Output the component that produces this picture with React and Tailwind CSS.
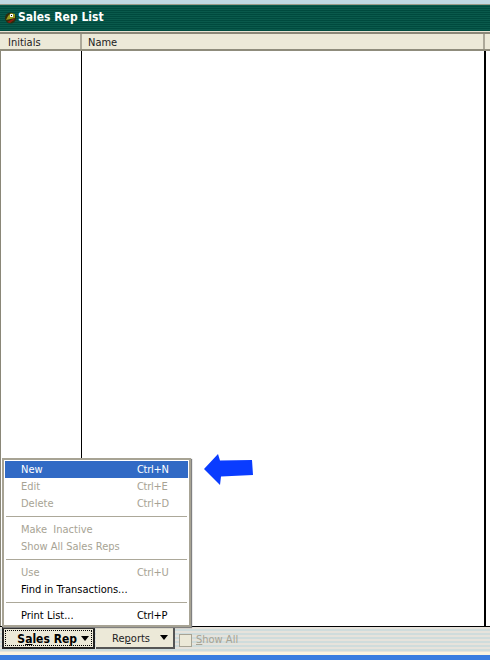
import React from "react";

const menu = [
  [{ label: "New", keys: "Ctrl+N", active: true }, { label: "Edit", keys: "Ctrl+E", off: true }, { label: "Delete", keys: "Ctrl+D", off: true }],
  [{ label: "Make  Inactive", off: true }, { label: "Show All Sales Reps", off: true }],
  [{ label: "Use", keys: "Ctrl+U", off: true }, { label: "Find in Transactions..." }],
  [{ label: "Print List...", keys: "Ctrl+P" }],
];

function MenuRow({ item }) {
  const color = item.active ? "bg-[#316ac5] text-white" : item.off ? "text-[#a7a394]" : "text-black";
  return (
    <div className={`flex h-[17px] items-center whitespace-pre pl-[16px] pt-[1px] ${color}`}>
      <span className="w-[116px]">{item.label}</span>
      <span className="tracking-[-0.3px]">{item.keys}</span>
    </div>
  );
}

function SalesMenu() {
  return (
    <div className="absolute left-[2px] top-[458px] w-[189px] border-2 border-[#a7a394] bg-white px-[1px] py-[1px] text-[11px] shadow-[1px_1px_1px_#808080]">
      {menu.map((group, i) => (
        <div key={i}>
          {i > 0 && <div className="mx-[1px] my-[4px] h-[1px] bg-[#aca899]" />}
          {group.map(item => <MenuRow key={item.label} item={item} />)}
        </div>
      ))}
    </div>
  );
}

function Icon() {
  return (
    <svg width="11" height="12" viewBox="0 0 11 12" className="mr-[2px] mt-[3px]">
      <ellipse cx="5.5" cy="6" rx="5.5" ry="5.5" fill="#2e2c0c" />
      <path d="M1 8L3 4L6 1L10 2L10 6Z" fill="#9a9a1e" />
      <rect x="5" y="2" width="3" height="3" fill="#fff" />
      <rect x="6" y="3" width="1" height="1" fill="#000" />
      <path d="M2 10L10 6L9 8L5 11Z" fill="#8c1c10" />
    </svg>
  );
}

function Caret() {
  return <span className="h-0 w-0 border-x-[4px] border-t-[5px] border-x-transparent border-t-black" />;
}

export default function App() {
  return (
    <div className="relative flex h-[660px] w-[490px] flex-col overflow-hidden bg-white font-['DejaVu_Sans',sans-serif] [font-stretch:condensed] text-black">
      <div className="h-[4px] shrink-0 bg-[#c0d8e2]" />
      <div className="h-[1px] shrink-0 bg-[#9a9a88]" />
      <div className="flex h-[26px] shrink-0 items-center bg-[repeating-linear-gradient(#0a5a4c_0px,#0a5a4c_1px,#004a3e_1px,#004a3e_2px)] pb-[3px] pl-[5px] text-[12px] font-bold text-white">
        <Icon />
        Sales Rep List
      </div>
      <div className="h-[1px] shrink-0 bg-[#e8e4d4]" />
      <div className="h-[2px] shrink-0 bg-[#8a8778]" />

      <div className="flex h-[17px] shrink-0 border-b-2 border-b-[#8f8c7c] bg-[#ece9d8] text-[11px] text-[#222]">
        <div className="w-[82px] border-r-2 border-r-[#aca899] pl-[8px] leading-[17px]">Initials</div>
        <div className="w-[403px] border-r-2 border-r-[#aca899] pl-[6px] leading-[17px]">Name</div>
      </div>

      <div className="flex min-h-0 flex-1 border-l border-l-[#8a8778]">
        <div className="w-[81px] border-r border-r-black" />
        <div className="w-[404px] border-r-2 border-r-black" />
      </div>

      <div className="flex h-[26px] shrink-0 items-start border-t border-t-black bg-[repeating-linear-gradient(#e6e3dc_0px,#e6e3dc_2px,#cfdcdc_2px,#cfdcdc_4px)] pl-[2px] text-[11px]">
        <div className="flex h-[22px] w-[93px] items-center justify-center border-2 border-[#222] bg-[#ece9d8] p-[1px] text-[12px] font-bold">
          <div className="flex h-full w-full items-center justify-end gap-[4px] border border-dotted border-black pr-[2px] pt-[1px]">
            <span>S<span className="underline">a</span>les Rep</span>
            <Caret />
          </div>
        </div>
        <div className="ml-[1px] flex h-[22px] w-[79px] items-center justify-end gap-[10px] border-b-2 border-r-2 border-b-[#555] border-r-[#555] bg-[#ece9d8] pr-[5px] text-[#222]">
          <span className="pt-[4px]">Re<span className="underline">p</span>orts</span>
          <Caret />
        </div>
        <div className="ml-[4px] mt-[2px] flex h-[22px] items-center gap-[4px] text-[11px] text-[#a7a394]">
          <span className="h-[13px] w-[13px] border border-[#a7a394] bg-[#ece9d8]" />
          <span><span className="underline">S</span>how All</span>
        </div>
      </div>
      <div className="h-[3px] shrink-0 bg-[#fbf3e0]" />
      <div className="h-[5px] shrink-0 bg-[#3b7de0]" />

      <SalesMenu />
      <svg width="50" height="32" viewBox="0 0 50 32" className="absolute left-[204px] top-[454px]">
        <path d="M0 15L14 0L16 6.5L48 6L49 21L17 22.5L16 31Z" fill="#0a3cff" />
      </svg>
    </div>
  );
}
